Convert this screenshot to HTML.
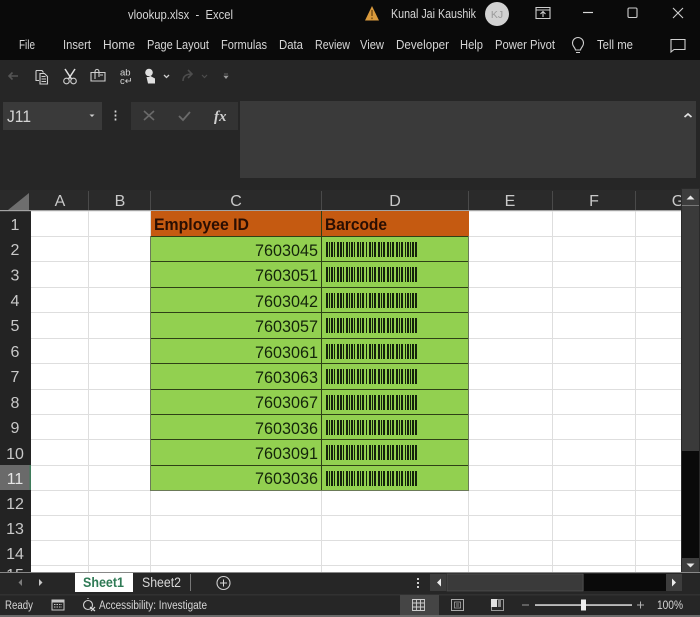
<!DOCTYPE html>
<html><head><meta charset="utf-8"><title>vlookup.xlsx - Excel</title>
<style>
html,body{margin:0;padding:0;background:#0a0a0a;width:700px;height:617px;overflow:hidden}
svg{display:block;filter:blur(.3px)}
text{font-family:"Liberation Sans",sans-serif}
.ui{font-size:12.5px;fill:#d6d6d6}
.hd{font-size:16px;fill:#c9c9c9;text-anchor:middle}
.cell{font-size:17px;fill:#13240a}
.b{font-size:16.5px;font-weight:bold;fill:#2a0e02}
.ic{fill:none;stroke:#cfcfcf;stroke-width:1.1}
</style></head><body>
<svg width="700" height="617" viewBox="0 0 700 617" xmlns="http://www.w3.org/2000/svg">
<!-- title + menu -->
<rect width="700" height="60" fill="#0a0a0a"/>
<text class="ui" x="128" y="19" textLength="105" lengthAdjust="spacingAndGlyphs">vlookup.xlsx&#160;&#160;-&#160;&#160;Excel</text>
<path d="M365 20.500L372 6L379 20.500Z" fill="#d99a3c"/><path d="M372 10v6M372 17.500v1.600" stroke="#4a2c05" stroke-width="1"/>
<text class="ui" x="391" y="18" textLength="85" lengthAdjust="spacingAndGlyphs">Kunal Jai Kaushik</text>
<circle cx="497" cy="14" r="12" fill="#d2d2d2"/>
<text x="497" y="18" text-anchor="middle" style="font-size:10.500px;fill:#9a9a9a">KJ</text>
<path class="ic" d="M536 7.500h14v11h-14zM536 10h14" stroke-width="1.200"/><path d="M543 17v-5M540.500 14l2.500-2.500 2.500 2.500" class="ic"/>
<path d="M583 12.500h10" stroke="#d8d8d8" stroke-width="1.200"/>
<rect x="628" y="8" width="9" height="9.500" rx="1.200" class="ic" stroke-width="1.300"/>
<path d="M673 8l10 10M683 8l-10 10" class="ic" stroke-width="1.200"/>
<g class="ui">
<text x="19" y="49" textLength="16" lengthAdjust="spacingAndGlyphs">File</text>
<text x="63" y="49" textLength="28" lengthAdjust="spacingAndGlyphs">Insert</text>
<text x="103" y="49" textLength="32" lengthAdjust="spacingAndGlyphs">Home</text>
<text x="147" y="49" textLength="62" lengthAdjust="spacingAndGlyphs">Page Layout</text>
<text x="221" y="49" textLength="46" lengthAdjust="spacingAndGlyphs">Formulas</text>
<text x="279" y="49" textLength="24" lengthAdjust="spacingAndGlyphs">Data</text>
<text x="315" y="49" textLength="35" lengthAdjust="spacingAndGlyphs">Review</text>
<text x="360" y="49" textLength="24" lengthAdjust="spacingAndGlyphs">View</text>
<text x="396" y="49" textLength="53" lengthAdjust="spacingAndGlyphs">Developer</text>
<text x="460" y="49" textLength="23" lengthAdjust="spacingAndGlyphs">Help</text>
<text x="495" y="49" textLength="60" lengthAdjust="spacingAndGlyphs">Power Pivot</text>
<text x="597" y="49" textLength="36" lengthAdjust="spacingAndGlyphs">Tell me</text>
</g>
<path class="ic" d="M575.500 50c0-2-3-3.500-3-7a5.500 5.500 0 0 1 11 0c0 3.500-3 5-3 7zM576 52.500h4" stroke-width="1.200"/>
<path class="ic" d="M671 39.500h14v10h-11l-3 2.500z"/>
<!-- toolbar -->
<rect y="60" width="700" height="41" fill="#262626"/>
<path d="M18 76H9M12.500 72.500L9 76l3.500 3.500" fill="none" stroke="#555" stroke-width="1.600"/>
<path class="ic" d="M36 70.500h6l1.500 2M36 70.500v10h3M40 73.500h4.500l3 3v7.500H40z"/>
<path d="M41.500 76.500h4M41.500 79h4.500M41.500 81.500h4.500" stroke="#cfcfcf" stroke-width=".9"/>
<path d="M65 69l6.500 10M75 69l-6.500 10" stroke="#e0e0e0" stroke-width="1.500" fill="none"/>
<circle cx="66.500" cy="81" r="2.800" class="ic" stroke-width="1.300"/><circle cx="73.500" cy="81" r="2.800" class="ic" stroke-width="1.300"/>
<path class="ic" d="M91 72.500h14v8.500H91zM95 79v-7c0-3.500 4-3.500 4 0v5M100 75h3"/>
<text x="120" y="75.500" style="font-size:9.500px;fill:#d6d6d6">ab</text>
<text x="120" y="84" style="font-size:9.500px;fill:#d6d6d6">c↵</text>
<circle cx="149" cy="72.500" r="3.800" fill="#e0e0e0"/><path d="M146.500 77h3v-1.500l5.500 3v5h-7z" fill="#e0e0e0"/>
<path d="M164 75l2.500 2.500L169 75" fill="none" stroke="#cfcfcf" stroke-width="1.300"/>
<path d="M183 81c0-5 3-7 9-7M188 70l4 4-4 4" fill="none" stroke="#4d4d4d" stroke-width="1.600"/>
<path d="M202 75l2.500 2.500L207 75" fill="none" stroke="#4d4d4d" stroke-width="1.200"/>
<path d="M224 74h4M224 76h4l-2 2.500z" fill="#9b9b9b" stroke="#9b9b9b" stroke-width=".6"/>
<!-- formula bar -->
<rect y="101" width="700" height="89" fill="#262626"/>
<rect x="3" y="102" width="99" height="28" fill="#3a3a3a"/>
<text x="7" y="122" style="font-size:16.500px;fill:#d4d4d4" textLength="24" lengthAdjust="spacingAndGlyphs">J11</text>
<path d="M89.500 114.500h5l-2.500 2.500z" fill="#d0d0d0"/>
<path d="M115.500 110.500v2M115.500 114.500v2M115.500 118.500v2" stroke="#d8d8d8" stroke-width="1.700"/>
<rect x="131" y="102" width="107" height="28" fill="#333"/>
<path d="M144 111l10 9M154 111l-10 9" stroke="#6a6a6a" stroke-width="1.600"/>
<path d="M179 116l4 4 7-8" fill="none" stroke="#6a6a6a" stroke-width="1.800"/>
<text x="214" y="121" style="font-family:'Liberation Serif',serif;font-size:15px;font-style:italic;font-weight:bold;fill:#cfcfcf">fx</text>
<rect x="240" y="101" width="456" height="77" fill="#3a3a3a"/>
<path d="M684.500 117l3.500-3 3.500 3" fill="none" stroke="#e0e0e0" stroke-width="1.800"/>
<!-- sheet -->
<rect y="190" width="700" height="21" fill="#2a2a2a"/>
<rect y="211" width="31" height="361" fill="#232323"/>
<path d="M29 193v17H8z" fill="#6e6e6e"/>
<rect x="31" y="211" width="652" height="361" fill="#fff"/>
<path d="M88.500 191v19M150.500 191v19M321.500 191v19M468.500 191v19M552.500 191v19M635.500 191v19" stroke="#4a4a4a"/>
<rect y="210" width="683" height="1.200" fill="#a3a3a3"/>
<g class="hd">
<text x="60" y="206">A</text><text x="120" y="206">B</text><text x="236" y="206">C</text><text x="395" y="206">D</text><text x="510" y="206">E</text><text x="594" y="206">F</text><text x="678" y="206">G</text>
</g>
<!-- grid -->
<g stroke="#dedede" stroke-width="1">
<path d="M31 236.500h652M31 261.500h652M31 287.500h652M31 312.500h652M31 338.500h652M31 363.500h652M31 389.500h652M31 414.500h652M31 439.500h652M31 465.500h652M31 490.500h652M31 515.500h652M31 540.500h652M31 565.500h652"/>
<path d="M88.500 211v361M150.500 211v361M321.500 211v361M468.500 211v361M552.500 211v361M635.500 211v361"/>
</g>
<!-- row header 11 highlight -->
<rect y="465" width="30" height="25" fill="#6a6a6a"/>
<rect x="29.500" y="465" width="1.500" height="25" fill="#3f7a5a"/>
<g class="hd">
<text x="15" y="230">1</text><text x="15" y="255">2</text><text x="15" y="280.500">3</text><text x="15" y="306">4</text><text x="15" y="331">5</text><text x="15" y="357">6</text><text x="15" y="382">7</text><text x="15" y="408">8</text><text x="15" y="433">9</text><text x="15" y="459">10</text><text x="15" y="484" style="fill:#e6e6e6">11</text><text x="15" y="509">12</text><text x="15" y="534">13</text><text x="15" y="559">14</text><text x="15" y="580">15</text>
</g>
<!-- table -->
<rect x="151" y="211" width="318" height="25" fill="#c55a11"/>
<rect x="151" y="236" width="318" height="254" fill="#92d050"/>
<g fill="none">
<path d="M151 236.500h318M151 261.500h318M151 287.500h318M151 312.500h318M151 338.500h318M151 363.500h318M151 389.500h318M151 414.500h318M151 439.500h318M151 465.500h318" stroke="#2e4016"/>
<path d="M321.500 211v279" stroke="#2e4016"/>
<path d="M150.500 236v254.500h318V236" stroke="#6b7a58"/>
</g>
<text class="b" x="154" y="230" textLength="95" lengthAdjust="spacingAndGlyphs">Employee ID</text>
<text class="b" x="325" y="230" textLength="62" lengthAdjust="spacingAndGlyphs">Barcode</text>
<g class="cell">
<text x="255" y="256" textLength="63" lengthAdjust="spacingAndGlyphs">7603045</text>
<text x="255" y="281" textLength="63" lengthAdjust="spacingAndGlyphs">7603051</text>
<text x="255" y="307" textLength="63" lengthAdjust="spacingAndGlyphs">7603042</text>
<text x="255" y="332" textLength="63" lengthAdjust="spacingAndGlyphs">7603057</text>
<text x="255" y="358" textLength="63" lengthAdjust="spacingAndGlyphs">7603061</text>
<text x="255" y="383" textLength="63" lengthAdjust="spacingAndGlyphs">7603063</text>
<text x="255" y="408" textLength="63" lengthAdjust="spacingAndGlyphs">7603067</text>
<text x="255" y="434" textLength="63" lengthAdjust="spacingAndGlyphs">7603036</text>
<text x="255" y="459" textLength="63" lengthAdjust="spacingAndGlyphs">7603091</text>
<text x="255" y="484" textLength="63" lengthAdjust="spacingAndGlyphs">7603036</text>
</g>
<defs>
<line id="bc" x1="326" x2="418" y1="7.500" y2="7.500" stroke="#14220b" stroke-width="15" stroke-dasharray="2 1 1 1 2 1 1 2 2 1 2 1 1 2 2 1 1 1 2 1 1 2 2 1 1 1 2 2 1 2 2 1 1 1 2 2 2 1 1 1 2 2 2 1 1 1 2 2 2 1 1 1 2 2 1 1 2 1 1 1 2 1 2 1 1"/>
</defs>
<use href="#bc" y="242"/><use href="#bc" y="267"/><use href="#bc" y="293"/><use href="#bc" y="318"/><use href="#bc" y="344"/><use href="#bc" y="369"/><use href="#bc" y="395"/><use href="#bc" y="420"/><use href="#bc" y="445"/><use href="#bc" y="471"/>
<!-- vertical scrollbar -->
<rect x="681" y="188" width="19" height="384" fill="#2a2a2a"/>
<rect x="682" y="189" width="17" height="16" fill="#3d3d3d"/>
<path d="M686.500 199.500l4-4 4 4z" fill="#e8e8e8"/>
<rect x="682" y="205" width="17" height="1" fill="#777"/>
<rect x="682" y="206" width="17" height="245" fill="#3a3a3a"/>
<rect x="682" y="451" width="17" height="107" fill="#0a0a0a"/>
<rect x="682" y="558" width="17" height="14" fill="#3d3d3d"/>
<path d="M686.500 563.500h8l-4 4z" fill="#e8e8e8"/>
<!-- tabs -->
<rect y="572" width="700" height="23" fill="#262626"/>
<rect y="572" width="700" height="1" fill="#888"/>
<path d="M22 579v7l-3.500-3.500z" fill="#7d7d7d"/>
<path d="M39 579v7l3.500-3.500z" fill="#c8c8c8"/>
<rect x="75" y="573" width="58" height="19" fill="#fff"/>
<text x="83" y="587" textLength="41" lengthAdjust="spacingAndGlyphs" style="font-size:13.500px;font-weight:bold;fill:#2f7a55">Sheet1</text>
<text x="142" y="587" textLength="39" lengthAdjust="spacingAndGlyphs" style="font-size:13.500px;fill:#d8d8d8">Sheet2</text>
<path d="M190.500 574v17" stroke="#777"/>
<circle cx="223.500" cy="583" r="6.500" class="ic"/><path d="M220 583h7M223.500 579.500v7" stroke="#d8d8d8"/>
<path d="M418 578v2M418 582v2M418 586v2" stroke="#e0e0e0" stroke-width="1.800"/>
<rect x="430" y="574" width="16" height="17" fill="#3d3d3d"/>
<path d="M441 578.500v8l-4-4z" fill="#ececec"/>
<rect x="447" y="574" width="136" height="17" fill="#3a3a3a" stroke="#555" stroke-width=".6"/>
<rect x="584" y="574" width="82" height="17" fill="#0a0a0a"/>
<rect x="666" y="574" width="16" height="17" fill="#3d3d3d"/>
<path d="M672 578.500v8l4-4z" fill="#ececec"/>
<!-- status -->
<rect y="595" width="700" height="20" fill="#262626"/>
<rect y="594.500" width="700" height=".8" fill="#3c3c3c"/>
<rect y="615" width="700" height="2" fill="#6a6a6a"/>
<text class="ui" x="5" y="609" textLength="28" lengthAdjust="spacingAndGlyphs" style="font-size:11.500px">Ready</text>
<path d="M52 600h12v10H52z" fill="none" stroke="#c8c8c8"/><path d="M52 600h12v2.500H52z" fill="#c8c8c8"/><path d="M54 604.500h8M54 607h8" stroke="#c8c8c8" stroke-dasharray="1.500 1"/>
<circle cx="88" cy="605" r="4.500" class="ic"/><path d="M88 599v-1M90 607l5 4M95 607l-4 4" stroke="#d8d8d8" stroke-width="1.200" fill="none"/>
<text class="ui" x="99" y="609" textLength="108" lengthAdjust="spacingAndGlyphs" style="font-size:11.500px">Accessibility: Investigate</text>
<rect x="400" y="595" width="39" height="20" fill="#454545"/>
<path d="M412.500 599.500h12v11h-12zM416.500 599.500v11M420.500 599.500v11M412.500 603h12M412.500 607h12" fill="none" stroke="#cfcfcf" stroke-width=".9"/>
<path d="M451.500 599.500h12v11h-12z" fill="none" stroke="#aaa"/><path d="M454.500 602h6v6h-6zM456 604h3M456 606h3" fill="none" stroke="#aaa" stroke-width=".8"/>
<path d="M491.500 599.500h12v11h-12z" fill="none" stroke="#999"/><rect x="491" y="599" width="6" height="8" fill="#e0e0e0"/><rect x="498" y="599" width="3" height="8" fill="#888"/>
<path d="M522 605h7" stroke="#9a9a9a"/>
<rect x="535" y="604.300" width="97" height="1.500" fill="#e0e0e0"/>
<rect x="581" y="599.500" width="5" height="11" fill="#efefef"/>
<path d="M637 605h7M640.500 601.500v7" stroke="#b0b0b0"/>
<text class="ui" x="657" y="609" textLength="26" lengthAdjust="spacingAndGlyphs" style="font-size:11.500px">100%</text>
</svg>
</body></html>
